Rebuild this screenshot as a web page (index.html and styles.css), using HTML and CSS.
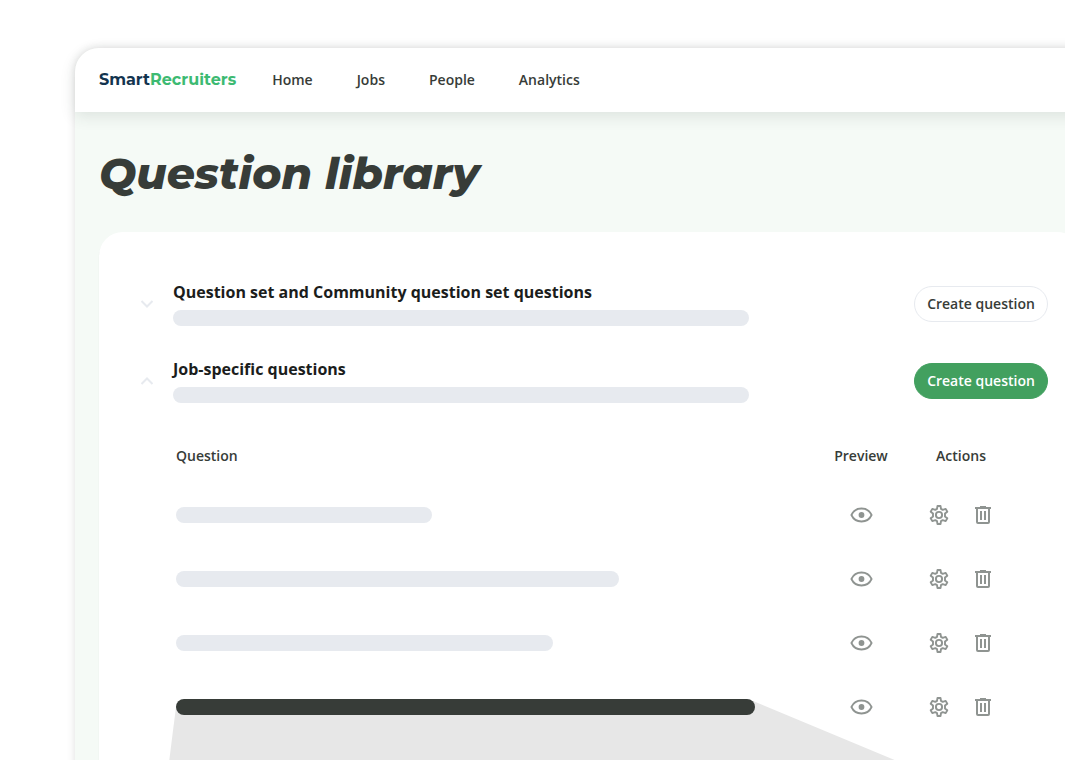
FILE: index.html
```html
<!DOCTYPE html>
<html lang="en">
<head>
<meta charset="utf-8">
<title>Question library</title>
<link rel="stylesheet" href="styles.css">
</head>
<body>
<svg class="sprite" aria-hidden="true">
  <symbol id="eye" viewBox="0 0 24 24"><path d="M2.400 12C4.300 7.900 8.100 5.500 12.500 5.500S20.700 7.900 22.600 12C20.700 16.100 16.900 18.500 12.500 18.500S4.300 16.100 2.400 12Z" fill="none" stroke="currentColor" stroke-width="1.800" stroke-linejoin="round"/><circle cx="12.500" cy="12" r="2.900" fill="currentColor"/></symbol>
  <symbol id="gear" viewBox="0 0 24 24"><g fill="none" stroke="currentColor" stroke-width="1.900" stroke-linejoin="round"><path d="M10.500 3h3l.5 2.900 1.700 1 3-1 1.600 2.800-2.300 1.900v2.800l2.300 1.900-1.600 2.800-3-1-1.700 1-.5 2.900h-3l-.5-2.900-1.700-1-3 1-1.600-2.800L6 13.400v-2.800L3.700 8.700l1.600-2.800 3 1 1.700-1Z"/><circle cx="12" cy="12" r="3.100"/></g></symbol>
  <symbol id="trash" viewBox="0 0 24 24"><path d="M4 5h16M9 4h6M6 5v14q0 1 1 1h10q1 0 1-1V5M10 8v9M14 8v9" fill="none" stroke="currentColor" stroke-width="2"/></symbol>
</svg>
<div class="app">
  <header class="topbar">
    <a class="logo" href="#">Smart<span class="logo-accent">Recruiters</span></a>
    <nav class="nav">
      <a href="#">Home</a>
      <a href="#">Jobs</a>
      <a href="#">People</a>
      <a href="#">Analytics</a>
    </nav>
  </header>
  <main class="content">
    <h1 class="title">Question library</h1>
    <div class="card">
      <section class="group">
        <button class="toggle" aria-label="Expand"><svg viewBox="0 0 14 8"><path d="M1.500 1l5.500 5.500L12.500 1"/></svg></button>
        <div class="group-text">
          <h2>Question set and Community question set questions</h2>
          <div class="bar bar-wide"></div>
        </div>
        <button class="create">Create question</button>
      </section>
      <section class="group">
        <button class="toggle" aria-label="Collapse"><svg viewBox="0 0 14 8"><path d="M1.500 7l5.500-5.500L12.500 7"/></svg></button>
        <div class="group-text">
          <h2>Job-specific questions</h2>
          <div class="bar bar-wide"></div>
        </div>
        <button class="create create-primary">Create question</button>
      </section>
      <table class="questions">
        <thead>
          <tr><th class="col-question">Question</th><th class="col-side">Preview</th><th class="col-side">Actions</th></tr>
        </thead>
        <tbody>
          <tr>
            <td class="col-question"><div class="bar" style="width:256px"></div></td>
            <td><div class="icons"><button aria-label="Preview"><svg><use href="#eye"/></svg></button></div></td>
            <td><div class="icons"><button aria-label="Settings"><svg><use href="#gear"/></svg></button><button aria-label="Delete"><svg><use href="#trash"/></svg></button></div></td>
          </tr>
          <tr>
            <td class="col-question"><div class="bar" style="width:443px"></div></td>
            <td><div class="icons"><button aria-label="Preview"><svg><use href="#eye"/></svg></button></div></td>
            <td><div class="icons"><button aria-label="Settings"><svg><use href="#gear"/></svg></button><button aria-label="Delete"><svg><use href="#trash"/></svg></button></div></td>
          </tr>
          <tr>
            <td class="col-question"><div class="bar" style="width:377px"></div></td>
            <td><div class="icons"><button aria-label="Preview"><svg><use href="#eye"/></svg></button></div></td>
            <td><div class="icons"><button aria-label="Settings"><svg><use href="#gear"/></svg></button><button aria-label="Delete"><svg><use href="#trash"/></svg></button></div></td>
          </tr>
          <tr>
            <td class="col-question"><div class="selected"><div class="beam"></div><div class="bar bar-dark" style="width:579px"></div></div></td>
            <td><div class="icons"><button aria-label="Preview"><svg><use href="#eye"/></svg></button></div></td>
            <td><div class="icons"><button aria-label="Settings"><svg><use href="#gear"/></svg></button><button aria-label="Delete"><svg><use href="#trash"/></svg></button></div></td>
          </tr>
        </tbody>
      </table>
    </div>
  </main>
</div>
</body>
</html>
```
FILE: styles.css
```css
* { box-sizing: border-box; }
body {
  margin: 0;
  height: 100vh;
  overflow: hidden;
  padding: 48px 0 0 75px;
  background: #fff;
  color: #373c38;
  font: 600 14px/20px "Open Sans", "Noto Sans", sans-serif;
}
.sprite { position: absolute; width: 0; height: 0; }
button { padding: 0; border: 0; background: none; color: inherit; font: inherit; cursor: pointer; }
a { color: inherit; text-decoration: none; }

.app {
  min-height: 100%;
  margin-right: -24px;
  padding-right: 24px;
  border-radius: 24px 0 0;
  background: #f5faf6;
  box-shadow: 0 0 8px rgba(0, 0, 0, 0.13);
}
.topbar {
  display: flex;
  align-items: center;
  gap: 36px;
  height: 64px;
  margin-right: -24px;
  padding-left: 24px;
  border-radius: 24px 0 0;
  background: #fff;
  box-shadow: 0 4px 16px rgba(40, 60, 50, 0.12);
}
.logo { color: #13344f; font: 700 16px/24px Montserrat, Lato, sans-serif; }
.logo-accent { color: #3dba72; }
.nav { display: flex; gap: 44px; }

.content { padding: 33px 0 0 24px; }
.title {
  margin: 0 0 31px;
  font: italic 800 44px/56px Montserrat, Inter, sans-serif;
}
.card {
  min-height: 560px;
  margin-right: -16px;
  padding: 50px 33px 0 40px;
  border-radius: 24px;
  background: #fff;
  box-shadow: 0 2px 1px rgba(0, 0, 0, 0.12);
}
.group { display: flex; align-items: center; margin-bottom: 33px; }
.toggle { display: flex; justify-content: center; width: 16px; margin-right: 18px; }
.toggle svg {
  width: 14px;
  height: 8px;
  fill: none;
  stroke: #e7eaef;
  stroke-width: 2;
}
.group-text { flex: 1; min-width: 0; }
.group h2 { margin: 0 0 8px; color: #1b1d1c; font-size: 16px; font-weight: 700; line-height: 20px; }
.bar { height: 16px; border-radius: 8px; background: #e7eaef; }
.bar-wide { max-width: 576px; }
.bar-dark { position: relative; background: #373c38; }
.create {
  min-width: 134px;
  height: 36px;
  padding: 0 11px;
  border: 1px solid #e7eaef;
  border-radius: 18px;
  background: #fff;
}
.create-primary { border-color: #42a05f; background: #42a05f; color: #fff; }

.questions {
  width: calc(100% - 71px);
  margin: -9px 0 0 34px;
  border-collapse: collapse;
  table-layout: fixed;
}
.questions th { height: 56px; padding: 2px 0 0; font-weight: inherit; }
.questions td { height: 64px; padding: 0; }
.questions .col-question { padding-left: 3px; text-align: left; }
.col-side { width: 100px; }
.icons { display: flex; justify-content: center; gap: 20px; color: #8f9491; }
.icons button, .icons svg { display: block; width: 24px; height: 24px; }
.selected { position: relative; }
.beam {
  position: absolute;
  top: 2px;
  left: -13px;
  width: 770px;
  height: 77px;
  background: #e7e7e7;
  clip-path: polygon(13px 6px, 590px 0, 770px 75px, 770px 77px, 4px 77px);
}
```
